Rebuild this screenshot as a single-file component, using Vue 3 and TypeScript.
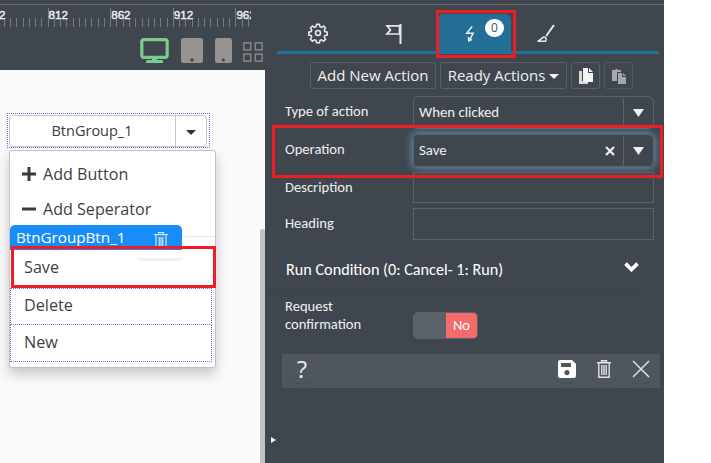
<script setup lang="ts">
import { ref } from 'vue'

interface Field { label: string; value: string; select: boolean; clearable?: boolean }

const marks = [762, 812, 862, 912, 962]
const majors = marks.map((n, i) => ({ n, x: -15 + i * 62.6 }))
const minors = Array.from({ length: 43 }, (_, i) => -15 + i * 6.26)

const fields = ref<Field[]>([
  { label: 'Type of action', value: 'When clicked', select: true },
  { label: 'Operation', value: 'Save', select: true, clearable: true },
  { label: 'Description', value: '', select: false },
  { label: 'Heading', value: '', select: false },
])
</script>

<template>
  <div class="app">
    <div class="designer">
      <div class="toolbar">
        <svg class="ruler" width="251" height="28">
          <rect v-for="x in minors" :key="x" :x="Math.round(x)" y="18" width="1" height="9" fill="#777b7e" />
          <g v-for="m in majors" :key="m.n">
            <rect :x="Math.round(m.x)" y="8" width="1" height="19" fill="#777b7e" />
            <text :x="m.x + 1" y="19">{{ m.n }}</text>
          </g>
        </svg>
        <div class="devices">
          <svg width="29" height="26" viewBox="0 0 29 26">
            <rect x="1.8" y="1.7" width="25.4" height="17.6" rx="2" fill="none" stroke="#7bcb91" stroke-width="3.2" />
            <path d="M12 19h5v3h5q1 0 1 2v1H6v-1q0-2 1-2h5z" fill="#7bcb91" />
          </svg>
          <svg class="tablet" width="22" height="25">
            <rect width="22" height="25" rx="2.5" fill="#969391" /><circle cx="11" cy="22" r="1.7" fill="#3f464d" />
          </svg>
          <svg class="phone" width="17" height="25">
            <rect width="17" height="25" rx="2.5" fill="#969391" /><circle cx="8.3" cy="22" r="1.6" fill="#3f464d" />
          </svg>
          <svg class="tiles" width="20" height="20" fill="none" stroke="#969391" stroke-width="1.2">
            <path d="M.8.8h7v7h-7zM12.2.8h7v7h-7zM.8 12.2h7v7h-7zM12.2 12.2h7v7h-7z" />
          </svg>
        </div>
      </div>
      <div class="canvas">
        <div class="group">
          <div class="group-btn">
            <span class="group-text">BtnGroup_1</span>
            <span class="group-caret"><i class="caret dark"></i></span>
          </div>
        </div>
        <div class="menu">
          <div class="menu-item">
            <svg width="14" height="14"><path d="M7 0v14M0 7h14" stroke="#3b3b3b" stroke-width="3" /></svg>
            <span>Add Button</span>
          </div>
          <div class="menu-item">
            <svg width="14" height="14"><path d="M0 7h14" stroke="#3b3b3b" stroke-width="3" /></svg>
            <span>Add Seperator</span>
          </div>
          <div class="divider"></div>
          <div class="child save">Save</div>
          <div class="child dotted">Delete</div>
          <div class="child dotted last">New</div>
          <div class="tag">
            <span>BtnGroupBtn_1</span>
            <svg width="14" height="16" viewBox="0 0 14 16" fill="none" stroke="#cfe5fb" stroke-width="1.2">
              <path d="M0 2.6h14M4.5 2V.7h5V2M2 3v12.3h10V3M5.2 5v9M7 5v9M8.8 5v9" />
            </svg>
          </div>
          <div class="shade"></div>
          <div class="mark mark-save"></div>
        </div>
        <div class="scroll"></div>
      </div>
    </div>

    <div class="panel">
      <div class="tabs">
        <div class="tab">
          <svg width="22" height="22" viewBox="-11 -11 22 22" fill="none" stroke="#e8e8e8" stroke-width="1.6">
            <path d="M-1.5-9.3h3l.6 2.5 1.5.6 2.2-1.4 2.1 2.1-1.4 2.2.6 1.5 2.5.6v3l-2.5.6-.6 1.5 1.4 2.2-2.1 2.1-2.2-1.4-1.5.6-.6 2.5h-3l-.6-2.5-1.5-.6-2.2 1.4-2.1-2.1 1.4-2.2-.6-1.5-2.5-.6v-3l2.5-.6.6-1.5-1.4-2.2 2.1-2.1 2.2 1.4 1.5-.6z" transform="translate(0 .3) scale(.96)" />
            <circle r="2.5" />
          </svg>
        </div>
        <div class="tab">
          <svg width="18" height="20" viewBox="0 0 18 20" fill="none" stroke="#e8e8e8">
            <path d="M14.5 1.8H2l3.5 4.1L2 10h12.5z" stroke-width="1.7" /><path d="M15.5 0v20" stroke-width="2" />
          </svg>
        </div>
        <div class="tab active">
          <svg width="10" height="16" viewBox="0 0 10 16" fill="none" stroke="#e8eef2" stroke-width="1.5">
            <path d="M7.2.4 1.8 7.3H8.2L4 14.8M3.4 11l.4 4 3.2-1.6" />
          </svg>
          <span class="badge">0</span>
        </div>
        <div class="tab brush">
          <svg width="20" height="20" viewBox="0 0 20 20" fill="none" stroke="#e8e8e8">
            <path d="m18 1-7.8 11" stroke-width="2" /><path d="M1.5 17.3c3-.4 4.5-4.3 6.5-4.3 2 .1 3 1.8 1.5 4.3z" stroke-width="1.5" />
          </svg>
        </div>
      </div>

      <div class="actions">
        <button class="btn add">Add New Action</button>
        <button class="btn ready">Ready Actions <i class="caret"></i></button>
        <button class="btn icon">
          <svg width="16" height="16" viewBox="0 0 16 16"><path d="M1 3h3v10h6v3H1z" fill="#d9dadb" /><path d="M5 0h5v5h5v9H5z" fill="#f4f4f4" /><path d="m11 0 4 4h-4z" fill="#f4f4f4" /></svg>
        </button>
        <button class="btn icon off">
          <svg width="16" height="16" viewBox="0 0 16 16" fill="#a5a8ab"><path d="M1 2h3l1.5-1.5L7 2h3v2H6v9H1z" /><path d="M7 5h4v4h4v7H7zM12 5l3 3h-3z" /></svg>
        </button>
      </div>

      <div class="fields">
        <div v-for="f in fields" :key="f.label" class="field">
          <label>{{ f.label }}</label>
          <div :class="['input', { select: f.select, focus: f.clearable }]">
            <span class="value">{{ f.value }}</span>
            <svg v-if="f.clearable" class="clear" width="10" height="10"><path d="m1 1 8 8M9 1 1 9" stroke="#f0f0f0" stroke-width="2.2" /></svg>
            <span v-if="f.select" class="drop"><svg width="11" height="8"><path d="M0 0h11L5.5 8z" fill="#f0f0f0" /></svg></span>
          </div>
        </div>
      </div>

      <div class="condition">
        <span>Run Condition (0: Cancel- 1: Run)</span>
        <svg width="15" height="10" fill="none" stroke="#fff" stroke-width="3.8"><path d="m1.5 1.7 6 5.8 6-5.8" /></svg>
      </div>

      <div class="confirm">
        <label>Request<br />confirmation</label>
        <div class="toggle"><span>No</span></div>
      </div>

      <div class="footer">
        <div class="round help">?</div>
        <div class="round">
          <svg width="18" height="18" viewBox="0 0 18 18"><path fill-rule="evenodd" d="M2 0h12l4 4v12q0 2-2 2H2q-2 0-2-2V2q0-2 2-2zm1 3v4h10V3zm6 7a2.6 2.6 0 1 0 .01 0z" fill="#fff" /></svg>
        </div>
        <div class="round trash">
          <svg width="14" height="18" viewBox="0 0 14 18" fill="none" stroke="#e2e2e2" stroke-width="1.4">
            <path d="M0 2.7h14M4.5 2.2V.7h5v1.5M1.8 3v14.2h10.4V3M4.8 5v10M7 5v10M9.2 5v10" />
          </svg>
        </div>
        <div class="round close">
          <svg width="18" height="18"><path d="m1 1 16 16M17 1 1 17" stroke="#e2e2e2" stroke-width="1.5" /></svg>
        </div>
      </div>
      <div class="handle"></div>
      <div class="mark mark-tab"></div>
      <div class="mark mark-operation"></div>
    </div>
    <div class="topline"></div>
  </div>
</template>

<style>
body { margin: 0; background: #fff; }
</style>

<style scoped>
* { box-sizing: border-box; }
.app { width: 711px; height: 463px; display: flex; position: relative; overflow: hidden; font-family: 'Open Sans', 'Noto Sans', sans-serif; }
.topline { position: absolute; left: 0; top: 4px; width: 664px; height: 1px; background: #656565; }
svg { display: block; flex-shrink: 0; }

.designer { width: 265px; display: flex; flex-direction: column; }
.toolbar { height: 70px; background: #3f464d; }
.ruler text { font: 11.6px 'Liberation Sans', Arial, sans-serif; fill: #f0f0f0; stroke: #f0f0f0; stroke-width: .4; }
.devices { display: flex; padding: 10px 0 0 140px; }
.tablet { margin-left: 12px; }
.phone { margin-left: 12px; }
.tiles { margin: 4px 0 0 11px; }

.canvas { flex: 1; background: #f9f9f9; position: relative; padding: 43px 0 0 7px; }
.group { width: 203px; height: 35px; border: 1px dotted #5579dc; padding: 1px; }
.group-btn { display: flex; width: 198px; height: 32px; border: 1px solid #c8c8c8; border-radius: 4px; background: #fff; color: #3b3b3b; }
.group-text { width: 166px; padding-right: 1px; border-right: 1px solid #c8c8c8; text-align: center; font-size: 14.5px; line-height: 30px; }
.group-caret { flex: 1; display: flex; align-items: center; justify-content: center; padding-top: 2px; }
.caret { display: inline-block; border: 5px solid transparent; border-top: 5px solid #f0f0f0; border-bottom: 0; }
.caret.dark { border-top-color: #333; }
.menu { position: relative; width: 207px; height: 218px; margin: 2px 0 0 2px; padding-top: 5px; background: #fff; border: 1px solid #c2c2c2; border-radius: 3px; box-shadow: 0 6px 12px rgba(0, 0, 0, .2); color: #3f3f3f; }
.menu-item { height: 35px; display: flex; align-items: center; gap: 7px; padding-left: 12px; font-size: 16.1px; }
.divider { height: 1px; margin-top: 10px; background: #e4e4e4; }
.child { width: 202px; height: 37px; line-height: 33px; padding-left: 14px; font-size: 16.2px; }
.child.save { height: 51px; padding-top: 14px; }
.child.dotted { border: 1px dotted #5579dc; padding-left: 13px; }
.child.last { border-top: 0; line-height: 35px; }
.tag { position: absolute; left: 0; top: 74px; width: 172px; height: 25px; padding: 0 14px 0 6px; display: flex; align-items: center; justify-content: space-between; background: #188df7; border-radius: 5px 5px 0 0; color: #fff; font-size: 15.2px; }
.tag span { line-height: 24px; height: 25px; }
.tag svg { margin-top: 4px; }
.shade { position: absolute; left: 128px; top: 107px; width: 44px; height: 3px; background: #f1f1f1; border-radius: 0 0 3px 3px; }
.mark { position: absolute; border: 3px solid #ee1c25; }
.mark-save { left: 1px; top: 95px; width: 205px; height: 42px; }
.scroll { position: absolute; right: 0; top: 159px; bottom: 0; width: 5px; background: #c2c2c2; border-radius: 3px 3px 0 0; }

.panel { position: relative; width: 399px; background: #3f464d; color: #f0f0f0; font-family: Carlito, Calibri, Lato, sans-serif; }
.tabs { display: flex; width: 382px; height: 40px; margin: 14px 0 0 12px; border-bottom: 3px solid #246f96; }
.tab { width: 81px; display: flex; justify-content: center; padding-top: 8px; }
.tab:nth-child(2) { padding: 10px 9px 0 0; }
.tab.active { position: relative; width: 72px; height: 40px; padding: 12px 10px 0 0; background: #246f96; border-radius: 4px 6px 0 0; }
.brush { width: 70px; padding-top: 10px; }
.badge { position: absolute; left: 46px; top: 5px; width: 19px; height: 18px; border-radius: 9px; background: #fff; color: #33536e; font: 12px/18px 'Open Sans', sans-serif; text-align: center; }
.actions { display: flex; gap: 4px; padding: 8px 0 0 45px; }
.btn { height: 27px; padding: 0; border: 1px solid #5a5f66; border-radius: 3px; background: #3f464d; color: #f0f0f0; font: 15px/23px 'Open Sans', 'Noto Sans', sans-serif; white-space: nowrap; }
.add { width: 126px; }
.ready { width: 127px; }
.ready .caret { vertical-align: 2px; }
.icon { width: 29px; display: flex; align-items: center; justify-content: center; }
.off { border-color: #52575d; }

.fields { padding: 7px 0 0 20px; font-size: 14.6px; }
.field { display: flex; }
.field label { width: 128px; line-height: 31px; }
.input { width: 241px; height: 31px; margin-bottom: 5px; border: 1px solid #5f6368; display: flex; align-items: center; }
.input.select { height: 33px; border-radius: 4px 6px 6px 4px; }
.field:last-child .input { height: 32px; }
.input.focus { box-shadow: 0 0 8px 1px #6693b8; }
.value { flex: 1; padding: 0 0 2px 5px; font-size: 14.8px; }
.clear { margin-right: 8px; }
.drop { width: 30px; height: 30px; border-left: 1px solid #5f6368; display: flex; align-items: center; justify-content: center; }
.condition { display: flex; align-items: center; justify-content: space-between; width: 374px; height: 47px; padding: 1px 0 0 21px; border-bottom: 1px solid #3b4147; color: #fff; font-size: 16.2px; }
.condition span { padding-top: 2px; }
.condition svg { margin-bottom: 4px; }
.confirm { display: flex; padding: 5px 0 0 20px; font-size: 14.6px; line-height: 18px; }
.confirm label { width: 128px; }
.toggle { width: 65px; height: 27px; margin-top: 15px; padding: 1px; border-radius: 5px; background: #5c626a; display: flex; justify-content: flex-end; }
.toggle span { width: 31px; height: 25px; border-radius: 0 4px 4px 0; background: #f36b6b; color: #fff; line-height: 25px; text-align: center; }
.footer { display: flex; width: 378px; height: 34px; margin: 15px 0 0 17px; padding: 0 4px 0 5px; background: #50565d; }
.round { width: 30px; height: 30px; display: flex; align-items: center; justify-content: center; border-radius: 50%; box-shadow: 0 1px 1px -1px #343a42; }
.help { margin-right: auto; font: 24px/28px 'Open Sans', sans-serif; color: #e8e8e8; }
.trash { margin-left: 7px; }
.close { margin-left: 7px; }
.handle { position: absolute; left: 6px; top: 437px; border: 3.5px solid transparent; border-left: 5px solid #f0f0f0; border-right: 0; }
.mark-tab { left: 171px; top: 10px; width: 80px; height: 48px; }
.mark-operation { left: 7px; top: 125px; width: 391px; height: 53px; }
</style>
